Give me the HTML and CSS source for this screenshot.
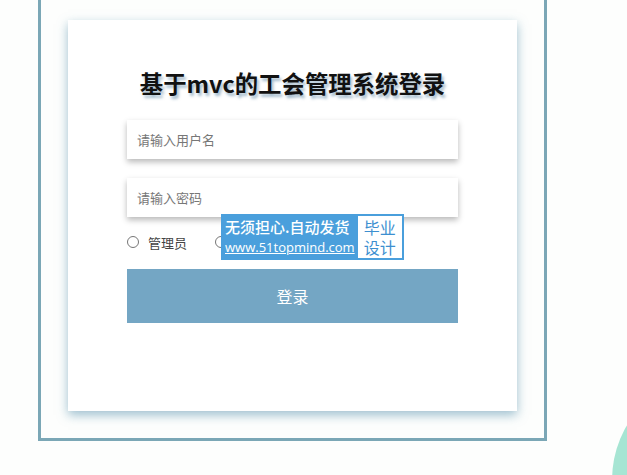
FILE: index.html
```html
<!DOCTYPE html>
<html lang="zh">

<head>
  <meta charset="UTF-8">
  <meta name="viewport" content="width=device-width, initial-scale=1.0">
  <title>基于mvc的工会管理系统登录</title>
  <link rel="stylesheet" href="styles.css">
</head>

<body>
  <div class="frame">
    <div class="login-box">
      <h2>基于mvc的工会管理系统登录</h2>
      <input class="field" type="text" placeholder="请输入用户名">
      <input class="field" type="password" placeholder="请输入密码">
      <div class="roles">
        <label><input type="radio" name="role"> 管理员</label>
        <label><input type="radio" name="role"> 用户</label>
      </div>
      <button class="submit">登录</button>
    </div>
  </div>

  <a class="promo" href="#">
    <span class="promo-text">
      <span class="promo-title">无须担心.自动发货</span>
      <span class="promo-url">www.51topmind.com</span>
    </span>
    <span class="promo-tag">毕业<br>设计</span>
  </a>

  <div class="blob"></div>
</body>

</html>
```

FILE: styles.css
```css
* {
  margin: 0;
  padding: 0;
  box-sizing: border-box;
}

html,
body {
  height: 100%;
  overflow: hidden;
}

body {
  background-color: #fdfefd;
  font-family: "Noto Sans CJK SC", "Noto Sans", sans-serif;
}

.frame {
  width: 509px;
  margin: -10px 0 0 38px;
  padding: 27px;
  border: 3px solid #7ba7b6;
}

.login-box {
  height: 391px;
  padding: 0 59px;
  background-color: #fff;
  box-shadow: 0 4px 10px rgba(80, 140, 170, 0.55);
}

.login-box h2 {
  padding: 39px 0 13px;
  text-align: center;
  font-size: 23.4px;
  line-height: 48px;
  font-weight: bold;
  color: #111;
  text-shadow: 2px 3px 3px rgba(100, 140, 170, 0.6);
}

.field {
  display: block;
  width: 100%;
  height: 39px;
  margin-bottom: 19px;
  padding: 0 10px;
  border: none;
  outline: none;
  background-color: #fff;
  font-family: inherit;
  font-size: 13px;
  box-shadow: 0 3px 6px rgba(0, 0, 0, 0.28);
}

.field::placeholder {
  color: #777;
}

.roles {
  display: flex;
  gap: 28px;
  margin-top: -9px;
  height: 30px;
  align-items: center;
  font-size: 13px;
  color: #444;
}

.roles label {
  display: flex;
  align-items: center;
  gap: 9px;
}

.roles input {
  width: 12px;
  height: 12px;
  margin: 0;
}

.submit {
  display: block;
  width: 100%;
  height: 54px;
  margin-top: 12px;
  border: none;
  background-color: #74a6c4;
  color: #fff;
  font-family: inherit;
  font-size: 16px;
}

/* floating ad badge */
.promo {
  position: fixed;
  left: 221px;
  top: 214px;
  display: flex;
  align-items: center;
  gap: 3px;
  padding: 2px 2px 2px 4px;
  background-color: #4a9fdc;
  text-decoration: none;
}

.promo-text {
  display: flex;
  flex-direction: column;
  color: #fff;
  line-height: 21px;
}

.promo-title {
  font-size: 15px;
  font-weight: 500;
}

.promo-url {
  font-size: 13px;
  text-decoration: underline;
  font-family: "Open Sans", sans-serif;
}

.promo-tag {
  padding: 1px 6px;
  background-color: #fff;
  color: #3d8fd0;
  font-size: 16px;
  line-height: 20px;
}

.blob {
  position: fixed;
  left: 612px;
  top: 372px;
  width: 216px;
  height: 216px;
  border-radius: 50%;
  background-color: #a6e5d3;
}
```
